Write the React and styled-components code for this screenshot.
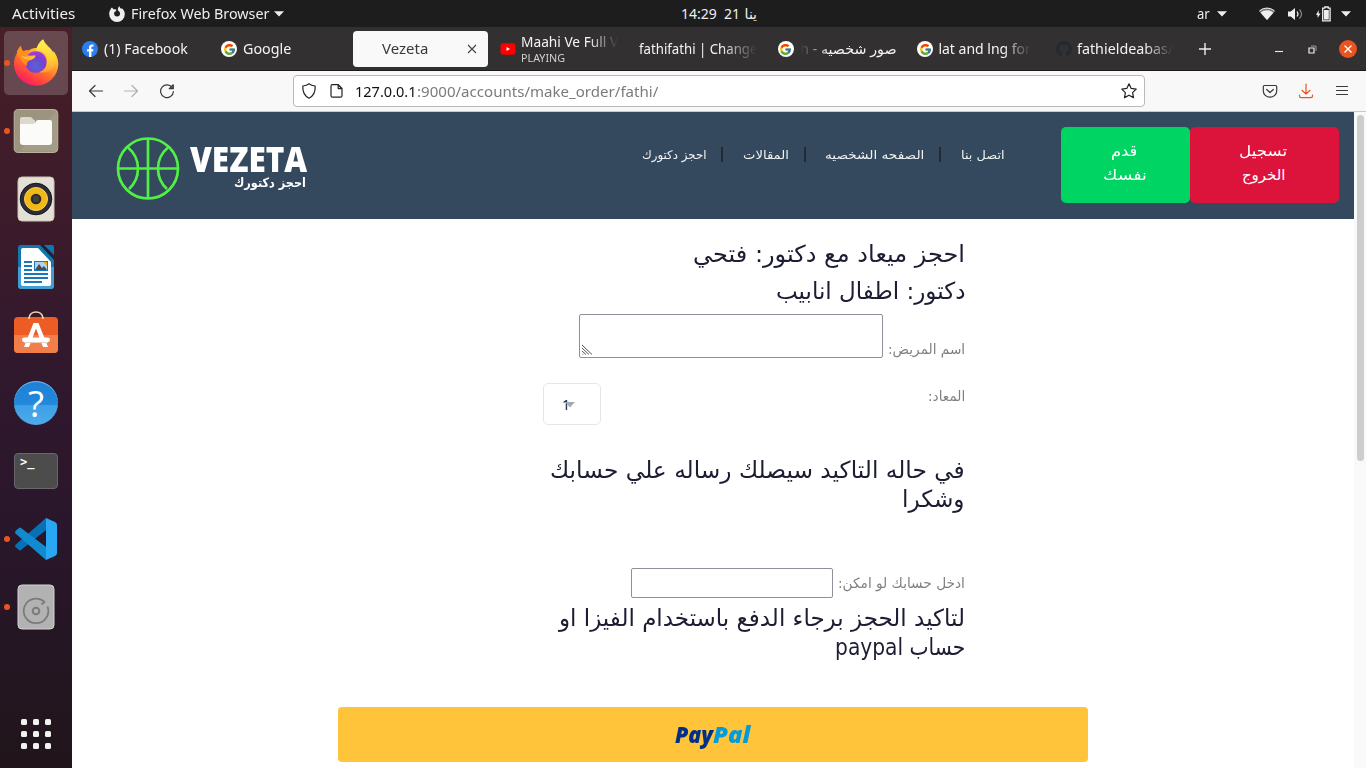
import React, { useLayoutEffect, useRef, useState } from "react";
import styled, { createGlobalStyle, css } from "styled-components";
import { FcGoogle } from "react-icons/fc";
import { FaGithub } from "react-icons/fa";

const GlobalStyle = createGlobalStyle`
  * { box-sizing: border-box; }
  body { margin: 0; overflow: hidden; background: #fff; font-family: "Noto Sans", "DejaVu Sans", sans-serif; }
  svg { display: block; flex: none; }
`;

/* A single line of text that is set to an exact measure. */
const Measure = styled.span`
  display: flex;
  flex: none;
  direction: ${(p) => (p.$rtl ? "rtl" : "ltr")};
  width: ${(p) => p.$w}px;
  margin-left: ${(p) => p.$ml || 0}px;
  white-space: pre;
  ${(p) => p.$fade && css`
    mask-image: linear-gradient(to ${p.$fade}, #000 70%, transparent 100%);
  `}
`;
const Glyphs = styled.span`
  display: block;
  flex: none;
  transform-origin: ${(p) => (p.$rtl ? "100% 50%" : "0 50%")};
`;
function Line({ w, rtl, ml, fade, className, children }) {
  const ref = useRef(null);
  const [scale, setScale] = useState(1);
  useLayoutEffect(() => {
    setScale(w / ref.current.offsetWidth);
  }, [w]);
  return (
    <Measure className={className} $w={w} $rtl={rtl} $ml={ml} $fade={fade}>
      <Glyphs ref={ref} $rtl={rtl} style={{ transform: `scaleX(${scale})` }}>{children}</Glyphs>
    </Measure>
  );
}

const Desktop = styled.div`
  width: 1366px;
  height: 768px;
  display: flex;
  flex-direction: column;
  overflow: hidden;
`;
const TopBar = styled.header`
  height: 27px;
  flex: none;
  display: flex;
  align-items: center;
  padding: 0 16px 0 12px;
  background: #1d1d1d;
  color: #eee;
  font-size: 14px;
  line-height: 26px;
`;
const Push = styled.span`
  display: flex;
  align-items: center;
  margin-left: ${(p) => p.$ml}px;
`;
const Workspace = styled.div`
  flex: 1;
  min-height: 0;
  display: flex;
`;
const Dock = styled.nav`
  width: 72px;
  flex: none;
  display: flex;
  flex-direction: column;
  padding-top: 2px;
  background: linear-gradient(#471f27 0%, #3b1b2b 28%, #30182d 48%, #29162a 70%, #231620 90%, #21151b 100%);
`;
const DockItem = styled.div`
  height: 68px;
  display: flex;
  align-items: center;
  padding-left: 4px;
  &::before {
    content: "";
    width: 6px;
    height: 6px;
    margin-right: -6px;
    border-radius: 50%;
    background: ${(p) => (p.$running ? "#e95420" : "transparent")};
    z-index: 1;
  }
`;
const DockTile = styled.div`
  width: 64px;
  height: 64px;
  display: grid;
  place-items: center;
  border-radius: 5px;
  background: ${(p) => (p.$active ? "rgba(255,255,255,.19)" : "transparent")};
`;
const AppsButton = styled.div`
  margin: auto 0 19px 21px;
  display: grid;
  grid-template-columns: repeat(3, 6px);
  gap: 6px;
  i { height: 6px; border-radius: 1.5px; background: #f2f2ef; }
`;
const Browser = styled.section`
  flex: 1;
  min-width: 0;
  display: flex;
  flex-direction: column;
`;
const TabStrip = styled.div`
  height: 44px;
  flex: none;
  display: flex;
  background: #323031;
  border-bottom: 1px solid #1c1a1b;
  color: #f4f4f4;
  font-size: 14px;
  line-height: 20px;
  padding: 0 9px 0 0;
`;
const Tab = styled.div`
  width: 139.3px;
  flex: none;
  display: flex;
  align-items: center;
  gap: ${(p) => p.$gap ?? 6}px;
  padding-left: ${(p) => p.$pad ?? 10}px;
  padding-top: 1px;
`;
const ActiveTab = styled.div`
  width: 135px;
  height: 36px;
  margin: 4px 2px 0 2.4px;
  flex: none;
  display: flex;
  align-items: center;
  padding: 0 11px 0 29px;
  justify-content: space-between;
  border-radius: 4px;
  background: #f9f9fa;
  color: #3b3a3a;
`;
const Stack = styled.div`
  display: flex;
  flex-direction: column;
  line-height: 17px;
  margin-left: -1px;
`;
const Playing = styled(Line)`
  font-size: 11px;
  line-height: 15px;
  color: #d2d2d2;
`;
const Round = styled.span`
  width: 16px;
  height: 16px;
  flex: none;
  border-radius: 50%;
  display: grid;
  place-items: center;
  background: #fff;
`;
const WindowControls = styled.div`
  flex: 1;
  display: flex;
  align-items: center;
  justify-content: space-between;
  padding-left: 13px;
  padding-top: 1px;
`;
const Toolbar = styled.div`
  height: 41px;
  flex: none;
  display: flex;
  align-items: center;
  padding: 0 16px;
  background: #f8f8f8;
  border-bottom: 1px solid #c8c8c8;
`;
const AddressBar = styled.div`
  width: 852px;
  height: 32px;
  margin: 0 117px 0 118px;
  display: flex;
  align-items: center;
  padding: 0 7px;
  border: 1px solid #b9b9b9;
  border-radius: 4px;
  background: #fff;
  color: #7b7b7b;
  font-size: 15px;
  line-height: 30px;
`;
const Host = styled(Line)`
  color: #111;
`;
const Viewport = styled.div`
  flex: 1;
  min-height: 0;
  display: flex;
`;
const Page = styled.div`
  width: 1282px;
  flex: none;
  overflow: hidden;
  font-family: "DejaVu Sans", sans-serif;
`;
const ScrollTrack = styled.div`
  flex: 1;
  padding: 3px 2px 0 3px;
  background: #f9f9f9;
  &::before {
    content: "";
    display: block;
    height: 346px;
    border-radius: 4px;
    background: #cdcdcd;
  }
`;
const SiteHeader = styled.header`
  height: 107px;
  display: flex;
  align-items: flex-start;
  background: #34495e;
  color: #fff;
`;
const Brand = styled.div`
  display: flex;
  margin: 25px 0 0 44px;
`;
const BrandText = styled.div`
  display: flex;
  flex-direction: column;
  margin: 6px 0 0 10px;
`;
const BrandName = styled(Line)`
  font: 800 35px/32px "Open Sans", sans-serif;
`;
const BrandTag = styled(Line)`
  font-size: 13px;
  font-weight: 700;
  line-height: 16px;
`;
const SiteNav = styled.nav`
  display: flex;
  align-items: center;
  margin: 35px 0 0 334px;
  height: 15px;
  font-size: 12px;
  line-height: 16px;
  color: #f0f2f4;
`;
const Separator = styled.i`
  width: 2px;
  height: 15px;
  margin: 0 ${(p) => p.$r ?? 20}px 0 15px;
  background: #222b35;
`;
const HeaderButton = styled.button`
  width: ${(p) => p.$w}px;
  height: 76px;
  padding: 0 2px 5px 0;
  display: flex;
  flex-direction: column;
  align-items: center;
  justify-content: center;
  border: 0;
  border-radius: 5px;
  background: ${(p) => p.$bg};
  color: #fff;
  font: 15px/24px "DejaVu Sans", sans-serif;
`;
const HeaderActions = styled.div`
  display: flex;
  margin: 15px 15px 0 auto;
`;
const BookingForm = styled.form`
  width: 422px;
  margin: 17px 0 0 471px;
  display: flex;
  flex-direction: column;
`;
const Heading = styled.h3`
  margin: ${(p) => p.$mt || 0}px 0 0;
  display: flex;
  flex-direction: column;
  align-items: flex-end;
  font-weight: 400;
  font-size: 23.5px;
  line-height: ${(p) => p.$lh}px;
  color: #1c1c33;
`;
const Field = styled.div`
  direction: rtl;
  display: flex;
  align-items: ${(p) => p.$align || "center"};
  margin-top: ${(p) => p.$mt || 0}px;
  gap: 5px;
  justify-content: ${(p) => p.$justify || "flex-start"};
  font-size: 14px;
  line-height: 18px;
  color: #808080;
`;
const SlotLabel = styled(Line)`
  margin-top: 4px;
`;
const box = css`
  border: 1px solid #8f8f9d;
  border-radius: 2px;
  background: #fff;
`;
const NameArea = styled.div`
  ${box}
  width: 304px;
  height: 44px;
  direction: ltr;
  display: flex;
  align-items: flex-end;
  padding: 0 0 2px 2px;
`;
const AccountInput = styled.input`
  ${box}
  width: 202px;
  height: 30px;
`;
const SlotSelect = styled.div`
  width: 58px;
  height: 42px;
  direction: ltr;
  display: flex;
  align-items: center;
  padding-left: 18px;
  border: 1px solid #e4e6e8;
  border-radius: 5px;
  color: #222;
  font: 14px "Noto Sans", sans-serif;
  svg { margin: 1px 0 0 -5px; }
`;
const PayButton = styled.button`
  display: flex;
  align-items: center;
  justify-content: center;
  width: 750px;
  height: 55px;
  margin: 46px 0 0 266px;
  padding: 0 2px 2px 0;
  border: 0;
  border-radius: 4px;
  background: #ffc439;
  font: italic 800 22px/28px "Open Sans", sans-serif;
  color: #003087;
  em { color: #009cde; }
`;

const Caret = () => (
  <svg width="10" height="6" viewBox="0 0 10 6"><path d="M0 .3h10L5 5.4z" fill="#eee" /></svg>
);
const GoogleMark = () => <Round><FcGoogle size={13} /></Round>;

const FirefoxSymbol = () => (
  <svg width="16" height="16" viewBox="0 0 16 16">
    <path fill="#eee" d="M3 1.4 4.8 3.4C6 3 7 3.2 7.6 4c-.6.2-.7.6-.7 1L5.3 6.2c-.7 2.3.6 4.3 2.8 4.3 2 0 3.2-1.5 2.9-3.4-.2-1.5-1.2-2.3-2-2.7C8.600 3 9 1.400 10.300 0c.2 1.600 1.200 2.200 2.200 3.100l.1-1.100c2 1.500 3.200 3.500 3.200 6A7.800 7.800 0 0 1 8 16 7.800 7.800 0 0 1 .2 8.200C.1 6.300.7 4.900 1.500 3.800c0-.9.6-1.900 1.500-2.400z" />
  </svg>
);
const WifiIcon = () => (
  <svg width="16" height="14" viewBox="0 0 16 14">
    <path fill="#777" d="M0 4C4.500-.3 11.500-.3 16 4l-8 9z" />
    <path fill="#eee" d="M1.600 5.700C5.300 2.500 10.700 2.500 14.400 5.700L8 13z" />
    <path fill="none" stroke="#eee" d="M.5 4C4.800.200 11.200.200 15.500 4" />
  </svg>
);
const VolumeIcon = () => (
  <svg width="15" height="14" viewBox="0 0 15 14">
    <path fill="#eee" d="M0 4.500h2.800L7 1v12L2.800 9.500H0z" />
    <path fill="none" stroke="#eee" strokeWidth="1.200" d="M9 4.500q2 2.500 0 5" />
    <path fill="none" stroke="#888" strokeWidth="1.200" d="M11.500 2.500q4 4.500 0 9" />
  </svg>
);
const BatteryIcon = () => (
  <svg width="15" height="16" viewBox="0 0 15 16">
    <path fill="#eee" d="M2.700 4v3.500H4.500L1.600 12V9H0z" />
    <path fill="none" stroke="#eee" strokeWidth="1.300" d="M6.700 2.200H8.800V1h3.400v1.200h1.900v12.600H6.700z" />
    <path fill="#eee" d="M8 4h4.800v9.500H8z" />
  </svg>
);

const FirefoxIcon = () => (
  <svg width="48" height="48" viewBox="0 0 48 48">
    <defs>
      <linearGradient id="ffBody" x1=".8" y1="0" x2=".2" y2="1">
        <stop offset="0" stopColor="#fff44f" /><stop offset=".3" stopColor="#ffbd2f" />
        <stop offset=".6" stopColor="#ff6a2b" /><stop offset=".85" stopColor="#ff2f4f" /><stop offset="1" stopColor="#e31587" />
      </linearGradient>
      <linearGradient id="ffTail" x1="0" y1="0" x2="0" y2="1">
        <stop offset="0" stopColor="#fff255" /><stop offset=".6" stopColor="#ffd12e" /><stop offset="1" stopColor="#ff9640" />
      </linearGradient>
      <radialGradient id="ffGlobe" cx=".5" cy=".7" r=".7">
        <stop offset="0" stopColor="#5a62d8" /><stop offset=".6" stopColor="#7542cf" /><stop offset="1" stopColor="#b534dd" />
      </radialGradient>
    </defs>
    <path fill="url(#ffBody)" d="M9 7c0 2.500 1 4 2.500 5.500C13 11.500 15 11 17 11.500 19 9 24 8 29 10c-.500-4 1-8 2.500-9.500 1 4 5 6.500 8 10.500l1.500 3 .5-2c3 4 4.800 8 4.800 13A22 21.500 0 0 1 2 25c0-4 1-8 3-11 .300-3 2-5.500 4-7z" />
    <circle cx="23.800" cy="23" r="10.800" fill="url(#ffGlobe)" />
    <path fill="url(#ffTail)" d="M31 .3C27 3 24.500 7.500 24 12c8-1 12 4 11 12-.5 5-4 8-8 9 8 2 15-2 16.500-9 1-5-1-9-4-13-3-3.500-7.500-6-8.500-10.700z" />
    <path fill="#ff8e1f" d="M9 7c0 2.500 1 4 2.500 5.500C13 11.500 15 11 17.500 11.500 16 13 15.500 15 16.500 16.500h7c0 2-2.500 3.500-5 4.500-3 1-4 3-3.500 6-3-2-7-6-10-13 .300-3 2-5.500 4-7z" />
    <path fill="#ffc02e" d="M9 17c5 1.500 9 0 14.500-.5 0 2-2.500 3.500-5 4.500C14 21 11 19 9 17z" />
  </svg>
);
const FilesIcon = () => (
  <svg width="48" height="48" viewBox="0 0 48 48">
    <rect x="2.200" y="2.500" width="43.600" height="43" rx="4" fill="#9d947f" stroke="#bbb4a2" />
    <path d="M45 4v40H8z" fill="#b4ad9b" opacity=".35" />
    <path d="M8 12q0-2 2-2h8q2 0 2.500 1.500t2.500 1.500V20H8z" fill="#ddd8cc" />
    <path d="M8 17h13q1.500 0 2.500-2t2.500-2H38q2 0 2 2v20q0 3-3 3H11q-3 0-3-3z" fill="#fbfbfa" />
  </svg>
);
const RhythmboxIcon = () => (
  <svg width="48" height="48" viewBox="0 0 48 48">
    <rect x="6" y="2" width="36" height="44" rx="4" fill="#e5e0d6" stroke="#c9c3b7" />
    <circle cx="24" cy="24" r="15.800" fill="#2d2d38" stroke="#16161c" />
    <circle cx="24" cy="24" r="11.500" fill="#f1b916" stroke="#f7d35c" />
    <circle cx="24" cy="24" r="5.300" fill="#2a2a2c" /><circle cx="24" cy="24" r="3.200" fill="#414144" />
  </svg>
);
const WriterIcon = () => (
  <svg width="48" height="48" viewBox="0 0 48 48">
    <path d="M9 2h20l13 13v28q0 3-3 3H9q-3 0-3-3V5q0-3 3-3z" fill="#1576ae" />
    <path d="M6 24h36v19q0 3-3 3H9q-3 0-3-3z" fill="#3f9fd2" />
    <path d="M11 5h15l13 14v22q0 2-2 2H11q-2 0-2-2V7q0-2 2-2z" fill="#fff" />
    <path d="M32 2h8q2 0 2 2v8z" fill="#0e76b5" /><path d="M28 2 42 17v-3L31 2z" fill="#10283b" />
    <path d="M12 19h8m-8 4h8m-8 4h8m-8 4h24m-24 4h24m-24 4h18" stroke="#1878b8" strokeWidth="2" />
    <path d="M22 18h14v10H22z" fill="#1878b8" /><path d="M23 19h12v8H23z" fill="#a9d5f0" />
    <path d="m23 27 4-6 3 4 2-2 3 4z" fill="#4b4b4b" /><path d="M31 19h4v3.500z" fill="#e5ac20" />
  </svg>
);
const SoftwareIcon = () => (
  <svg width="48" height="48" viewBox="0 0 48 48">
    <rect x="2" y="6" width="44" height="36" rx="4" fill="#ed5c25" />
    <path d="M2 24h44v14q0 4-4 4H6q-4 0-4-4z" fill="#f27f4a" />
    <path d="M17 8v-1q1-6 7-6t7 6v1" fill="none" stroke="#f2d5ae" strokeWidth="1.600" />
    <path d="M21.500 12h5L36 36h-5L24 17.500 17 36h-5z" fill="#fff" />
    <rect x="10" y="26.500" width="28" height="4.600" rx="2.300" fill="#fff" />
    <path d="M12 31.500h24" stroke="#e7cfc4" />
  </svg>
);
const QuestionGlyph = styled.span`
  color: #fff;
  font: 37px/44px "Open Sans", sans-serif;
`;
const HelpDisc = styled.div`
  width: 44px;
  height: 44px;
  display: grid;
  place-items: center;
  border-radius: 50%;
  background: linear-gradient(#1e80d6 0, #2389dc 54%, #3d9fe6 54%, #4eabeb 100%);
  box-shadow: inset 0 1px 0 #70b5ec;
`;
const TerminalTile = styled.div`
  width: 44px;
  height: 36px;
  padding: 1px 0 0 5px;
  border-radius: 4px;
  border: 1px solid #686868;
  background: #4c4c4c;
  color: #fff;
  font: 700 12px/15px "DejaVu Sans Mono", monospace;
`;
const CodeIcon = () => (
  <svg width="48" height="48" viewBox="0 0 48 48">
    <path fill="#0871b5" d="M34 3v12L9 35q-1 1-2 0l-3.500-3q-1-1.200 0-2.300z" />
    <path fill="#118bd0" d="M3.500 16 7 13q1-1 2 0l25 19v13L3.500 18.500q-1-1.200 0-2.500z" />
    <path fill="#2aa7f3" d="m34 3 9 4q2 1 2 3v28q0 2-2 3l-9 4z" />
  </svg>
);
const DiskIcon = () => (
  <svg width="48" height="48" viewBox="0 0 48 48">
    <rect x="6" y="2" width="36" height="44" rx="4" fill="#b2b2b2" stroke="#d2d2d2" />
    <path d="M32.500 19A12.300 12.300 0 1 0 35.500 23.500M29.500 21.500l3.500-3" fill="none" stroke="#7b7b7b" strokeWidth="1.800" />
    <circle cx="24" cy="28" r="3.300" fill="none" stroke="#7b7b7b" strokeWidth="2" />
  </svg>
);

const dockApps = [
  { id: "firefox", icon: <FirefoxIcon />, running: true, active: true },
  { id: "files", icon: <FilesIcon />, running: true },
  { id: "music", icon: <RhythmboxIcon /> },
  { id: "writer", icon: <WriterIcon /> },
  { id: "software", icon: <SoftwareIcon /> },
  { id: "help", icon: <HelpDisc><QuestionGlyph>?</QuestionGlyph></HelpDisc> },
  { id: "terminal", icon: <TerminalTile>&gt;_</TerminalTile> },
  { id: "code", icon: <CodeIcon />, running: true },
  { id: "disk", icon: <DiskIcon />, running: true },
];

const ToolIcon = ({ children, color = "#3a3a3a", size = 16 }) => (
  <svg width={size} height={size} viewBox="0 0 16 16" fill="none" stroke={color} strokeWidth="1.200" strokeLinecap="round" strokeLinejoin="round">{children}</svg>
);

export default function App() {
  return (
    <Desktop>
      <GlobalStyle />
      <TopBar>
        <Line w={63}>Activities</Line>
        <Push $ml={34}><FirefoxSymbol /></Push>
        <Line w={138} ml={6}>Firefox Web Browser</Line>
        <Push $ml={5}><Caret /></Push>
        <Line w={36} ml={397}>14:29</Line>
        <Line w={16} ml={7}>21</Line>
        <Line w={12} ml={5} rtl>ينا</Line>
        <Line w={13} ml={440}>ar</Line>
        <Push $ml={7}><Caret /></Push>
        <Push $ml={32}><WifiIcon /></Push>
        <Push $ml={13}><VolumeIcon /></Push>
        <Push $ml={13}><BatteryIcon /></Push>
        <Push $ml={10}><Caret /></Push>
      </TopBar>
      <Workspace>
        <Dock>
          {dockApps.map((app) => (
            <DockItem key={app.id} $running={app.running}>
              <DockTile $active={app.active}>{app.icon}</DockTile>
            </DockItem>
          ))}
          <AppsButton>{Array.from({ length: 9 }, (_, i) => <i key={i} />)}</AppsButton>
        </Dock>
        <Browser>
          <TabStrip>
            <Tab>
              <svg width="16" height="16" viewBox="0 0 16 16"><circle cx="8" cy="8" r="8" fill="#2b7df0" /><path fill="#fff" d="M7 16v-5.500H5V8.200h2V6.400q0-3 3-3l1.500.1v2h-1.100q-1 0-1 1v1.700h2.100l-.4 2.300H9.400V16z" /></svg>
              <Line w={84}>(1) Facebook</Line>
            </Tab>
            <Tab><GoogleMark /><Line w={48}>Google</Line></Tab>
            <ActiveTab>
              <Line w={46}>Vezeta</Line>
              <svg width="10" height="10" viewBox="0 0 10 10"><path d="m1 1 8 8m0-8L1 9" stroke="#444" strokeWidth="1.100" /></svg>
            </ActiveTab>
            <Tab>
              <svg width="16" height="16" viewBox="0 0 16 16"><rect x=".5" y="2.300" width="15" height="11.500" rx="3" fill="#f00" /><path d="M6.500 6v4L10 8z" fill="#fff" /></svg>
              <Stack>
                <Line w={97} fade="right">Maahi Ve Full V</Line>
                <Playing w={44}>PLAYING</Playing>
              </Stack>
            </Tab>
            <Tab $pad={9.5}><Line w={118} fade="right">fathifathi | Change</Line></Tab>
            <Tab $pad={9}><GoogleMark /><Line w={97} rtl fade="left">صور شخصيه - h</Line></Tab>
            <Tab $gap={5} $pad={9.5}><GoogleMark /><Line w={93} fade="right">lat and lng for</Line></Tab>
            <Tab $gap={5} $pad={9}><FaGithub size={16} color="#24292e" /><Line w={96} fade="right">fathieldeabas/</Line></Tab>
            <WindowControls>
              <svg width="12" height="12" viewBox="0 0 12 12"><path d="M6 0v12M0 6h12" stroke="#eee" strokeWidth="1.400" /></svg>
              <Push $ml={42}><svg width="8" height="10" viewBox="0 0 8 10"><path d="M0 7.500h8" stroke="#eee" strokeWidth="1.100" /></svg></Push>
              <Push $ml={4}><svg width="9" height="9" viewBox="0 0 9 9" fill="none"><path d="M3 1h5v5" stroke="#999" /><path d="M1 3h5v5H1z" stroke="#eee" strokeWidth="1.200" /></svg></Push>
              <svg width="18" height="18" viewBox="0 0 18 18"><circle cx="9" cy="9" r="9" fill="#e95420" /><path d="m5.500 5.500 7 7m0-7-7 7" stroke="#fff" strokeWidth="1.400" /></svg>
            </WindowControls>
          </TabStrip>
          <Toolbar>
            <ToolIcon><path d="M14.500 8H1.500M7 2.500 1.500 8 7 13.500" /></ToolIcon>
            <Push $ml={19}><ToolIcon color="#b0b0b0"><path d="M1.500 8h13M9 2.500 14.500 8 9 13.500" /></ToolIcon></Push>
            <Push $ml={20}><ToolIcon><path d="M13.500 5A6.400 6.400 0 1 0 14.400 8.500M14.300 1.800v3.900h-4z" /></ToolIcon></Push>
            <AddressBar>
              <ToolIcon color="#222"><path d="M8 .8q2.300 1.900 6.200 2.200C14.500 9 12.500 13 8 15.200 3.500 13 1.500 9 1.800 3 5.700 2.700 8 .8 8 .8z" /></ToolIcon>
              <Push $ml={12}><ToolIcon color="#222"><path d="M3.500 1.700h5.800l3.700 3.700v7.300q0 1.500-1.500 1.500h-8Q2 14.200 2 12.700V3.200q0-1.500 1.500-1.500zM9.200 2v3.600h3.600z" /></ToolIcon></Push>
              <Host w={62} ml={10}>127.0.0.1</Host>
              <Line w={241}>:9000/accounts/make_order/fathi/</Line>
              <Push $ml={463}><ToolIcon color="#222"><path d="m8 .8 2.200 4.600 5 .7-3.600 3.500.9 5L8 12.200l-4.500 2.400.9-5L.8 6.100l5-.7z" /></ToolIcon></Push>
            </AddressBar>
            <ToolIcon><path d="M2.500 2.500h11q1.200 0 1.200 1.200V8A6.700 6.200 0 0 1 1.300 8V3.700q0-1.200 1.200-1.200zM4.700 6.500 8 9.500l3.300-3" /></ToolIcon>
            <Push $ml={20}><ToolIcon color="#e95420"><path d="M8 1v10M4 7.300 8 11l4-3.700M1.500 12v1q0 1.700 1.700 1.700h9.600q1.700 0 1.700-1.700v-1" /></ToolIcon></Push>
            <Push $ml={20}><ToolIcon><path d="M2.500 3.500h11M2.500 7.500h11m-11 4h11" /></ToolIcon></Push>
          </Toolbar>
          <Viewport>
            <Page>
              <SiteHeader>
                <Brand>
                  <svg width="64" height="64" viewBox="0 0 64 64" fill="none" stroke="#50f045" strokeWidth="2.700">
                    <circle cx="32" cy="31.500" r="30" /><path d="M32 1.500v60M2 31.500h60M12 10.500q10 8.500 10 21t-9 20.500M52 10.500Q42 19 42 31.500t9 20.500" />
                  </svg>
                  <BrandText>
                    <BrandName w={117}>VEZETA</BrandName>
                    <BrandTag w={72} ml={44} rtl>احجز دكتورك</BrandTag>
                  </BrandText>
                </Brand>
                <SiteNav>
                  <Line w={65} rtl>احجز دكتورك</Line><Separator />
                  <Line w={46} rtl>المقالات</Line><Separator $r={19} />
                  <Line w={99} rtl>الصفحه الشخصيه</Line><Separator />
                  <Line w={44} rtl>اتصل بنا</Line>
                </SiteNav>
                <HeaderActions>
                  <HeaderButton $w={129} $bg="#00d563"><Line w={26} rtl>قدم</Line><Line w={44} rtl>نفسك</Line></HeaderButton>
                  <HeaderButton $w={149} $bg="#dc143c"><Line w={48} rtl>تسجيل</Line><Line w={44} rtl>الخروج</Line></HeaderButton>
                </HeaderActions>
              </SiteHeader>
              <BookingForm>
                <Heading $lh={37}>
                  <Line w={272} rtl>احجز ميعاد مع دكتور: فتحي</Line>
                  <Line w={189} rtl>دكتور: اطفال انابيب</Line>
                </Heading>
                <Field $mt={4} $align="flex-end">
                  <Line w={77} rtl>اسم المريض:</Line>
                  <NameArea>
                    <svg width="11" height="11" viewBox="0 0 11 11"><path d="m0 1 10 9.500M0 4l7 6.500M0 7l4 3.500M0 9.500l1 1" stroke="#555" strokeWidth="1" /></svg>
                  </NameArea>
                </Field>
                <Field $mt={25} $align="flex-start" $justify="space-between">
                  <SlotLabel w={37} rtl>المعاد:</SlotLabel>
                  <SlotSelect>1<svg width="10" height="6" viewBox="0 0 10 6"><path d="M0 0h10L5 5.500z" fill="#a3abb3" /></svg></SlotSelect>
                </Field>
                <Heading $mt={31} $lh={28.5}>
                  <Line w={415} rtl>في حاله التاكيد سيصلك رساله علي حسابك</Line>
                  <Line w={63} rtl>وشكرا</Line>
                </Heading>
                <Field $mt={55}>
                  <Line w={127} rtl>ادخل حسابك لو امكن:</Line>
                  <AccountInput />
                </Field>
                <Heading $mt={6} $lh={28.500}>
                  <Line w={406} rtl>لتاكيد الحجز برجاء الدفع باستخدام الفيزا او</Line>
                  <Line w={130} rtl>حساب paypal</Line>
                </Heading>
              </BookingForm>
              <PayButton><Line w={38}>Pay</Line><Line w={37}><em>Pal</em></Line></PayButton>
            </Page>
            <ScrollTrack />
          </Viewport>
        </Browser>
      </Workspace>
    </Desktop>
  );
}
